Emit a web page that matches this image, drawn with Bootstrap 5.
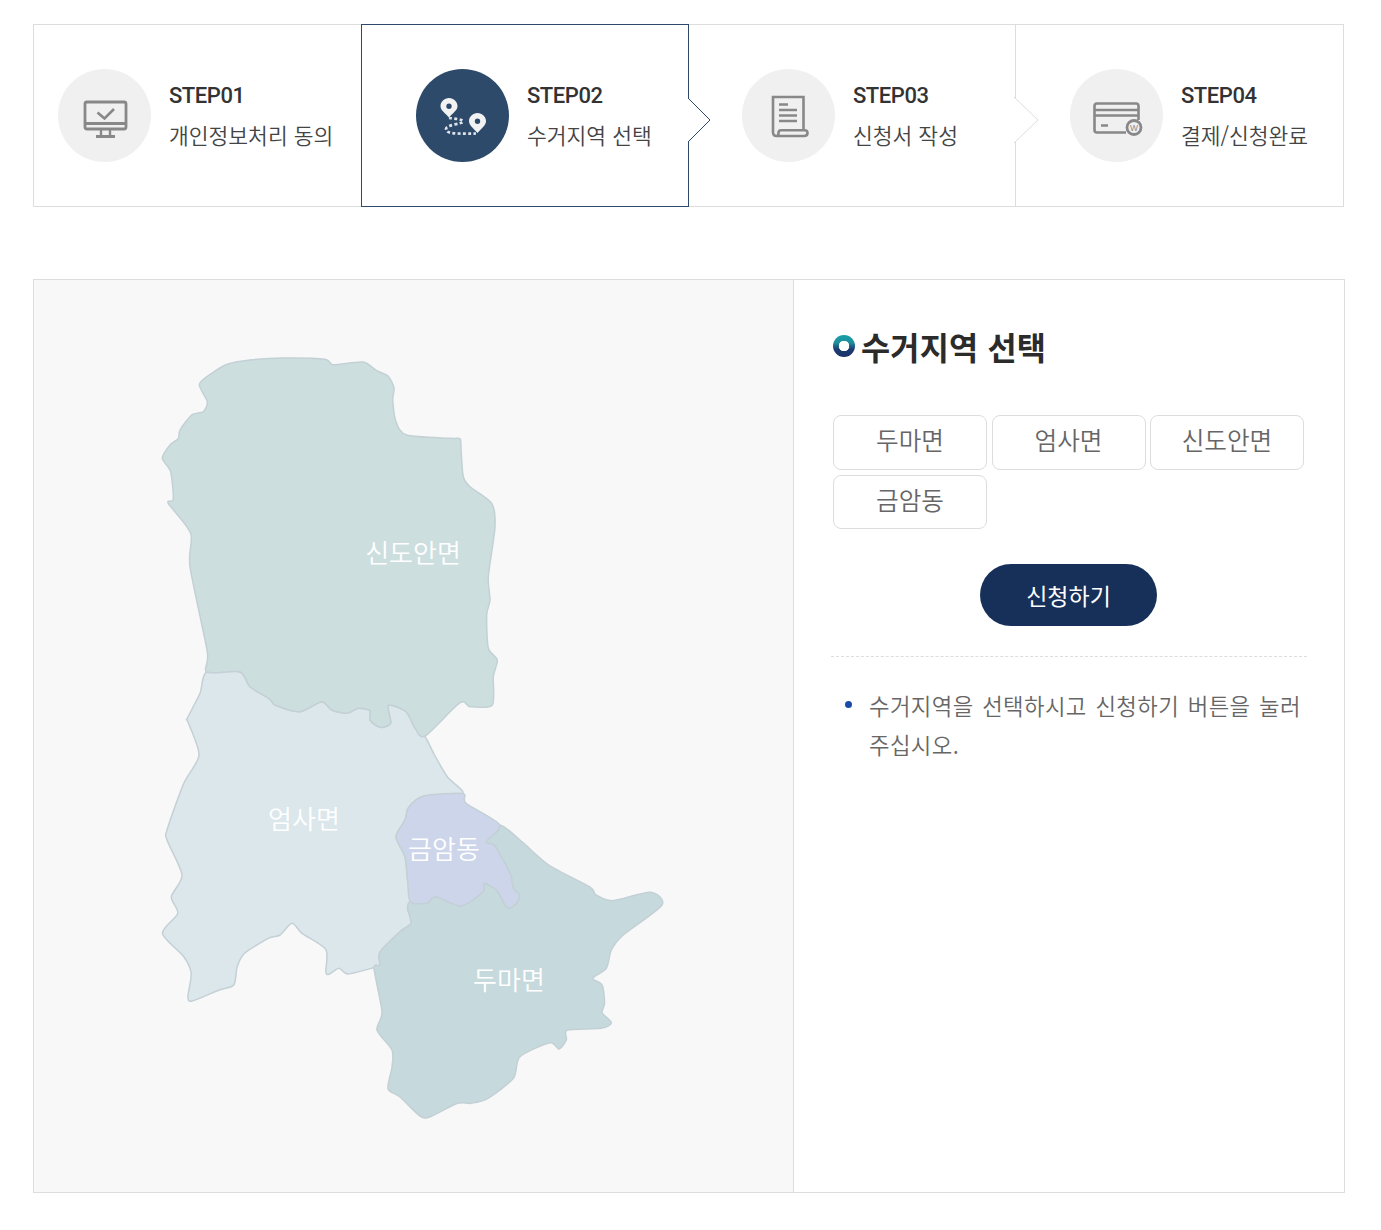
<!DOCTYPE html>
<html lang="ko">
<head>
<meta charset="utf-8">
<title>수거지역 선택</title>
<link href="https://cdn.jsdelivr.net/npm/bootstrap@5.3.0/dist/css/bootstrap.min.css" rel="stylesheet">
<style>
body{background:#fff;font-family:"Noto Sans CJK KR","Noto Sans",sans-serif;color:#333}
.page-wrap{padding:24px 36px 37px 33px;width:1381px}
.step-box{height:183px;border:1px solid #ddd;border-left-width:0;position:relative;background:#fff}
.s1{width:328px;border-left-width:1px;border-right-width:0;padding-left:24px}
.s2{width:328px;border:1px solid #2d4a6c;border-left-width:1px;padding-left:54px;z-index:2}
.s3{width:327px;padding-left:53px}
.s4{width:328px;padding-left:54px}
.s3{z-index:1}
.step-dot{width:93px;height:93px;flex:none;background:#f0f0f0;margin-right:18px}
.s2 .step-dot{background:#2d4a6b}
.step-dot svg{display:block}
.step-no{font:500 22px/40px Roboto,sans-serif;letter-spacing:-.45px;color:#333}
.step-sub{font-size:21.5px;line-height:38px;margin-bottom:2px;color:#444;font-weight:350;white-space:nowrap}
.step-tip{position:absolute;right:-23px;top:72px}
.s3 .step-tip{right:-24px}
.main-box{margin-top:72px;width:1312px;height:914px;border:1px solid #ddd}
.map-side{width:760px;flex:none;background:#f8f8f8;border-right:1px solid #ddd}
.map-side svg{display:block}
.map-label{font-size:26px;fill:#fff;font-weight:350;text-anchor:middle}
.info-side{width:550px;flex:none;padding:0 0 0 38px}
.info-title{font-size:31.700px;line-height:46px;font-weight:700;color:#2b2b2b;margin:43px 0 46px 1px;letter-spacing:.2px}
.ring{width:22px;height:22px;border-radius:50%;margin-right:6px;background:radial-gradient(circle at 50% 50%,#fff 0 5px,transparent 5.5px),linear-gradient(180deg,#17a0a6 0,#1f8f9e 35%,#1d3c72 65%,#1b3468 100%)}
.area-grid{margin-left:1px;width:475px;gap:5px 4.5px}
.area-btn{width:154px;height:54.5px;border:1px solid #ddd;border-radius:8px;background:#fff;color:#666;font-size:24.600px;font-weight:350;line-height:46px;padding:0 0 8px}
.apply-row{width:473px}
.apply-btn{width:177px;height:62px;border-radius:31px;background:#16305a;color:#fff;border:0;font-size:23px;font-weight:400;margin-top:35px}
.dash-line{border-top:1px dashed #ddd;margin:30px 0 0 -1px;width:476px}
.note-list{list-style:none;margin:29px 0 0;padding:0 0 0 37px;width:475px;position:relative}
.note-list li{font-size:22.300px;line-height:39px;color:#666;font-weight:350;position:relative;letter-spacing:.4px;word-spacing:2px}
.note-list li::before{content:"";position:absolute;left:-24px;top:15px;width:7px;height:7px;border-radius:50%;background:#1b4ba8}
</style>
</head>
<body>
<div class="page-wrap">
  <div class="d-flex">
    <div class="step-box s1 d-flex align-items-center">
      <div class="step-dot rounded-circle">
        <svg width="93" height="93" viewBox="0 0 93 93" fill="none" stroke="#888" stroke-width="2.800">
          <rect x="27" y="33" width="41" height="27" rx="2"/>
          <path d="M27 54.500h41M38 67.500h19" />
          <path d="M43 60v7M52 60v7" stroke-width="2.400"/>
          <path d="M39.500 43.500l7 6 9.500-9.500" stroke-width="2.600"/>
        </svg>
      </div>
      <div><div class="step-no">STEP01</div><div class="step-sub">개인정보처리 동의</div></div>
    </div>
    <div class="step-box s2 d-flex align-items-center">
      <div class="step-dot rounded-circle">
        <svg width="93" height="93" viewBox="0 0 93 93" fill="none">
          <path fill-rule="evenodd" fill="#f2f2f2" d="M33 29c4.700 0 8.500 3.700 8.500 8.200 0 4.400-5 6.800-8.500 11.300-3.500-4.500-8.500-6.900-8.500-11.300C24.500 32.700 28.300 29 33 29zm0 5.500a2.700 2.700 0 1 0 0 5.400 2.700 2.700 0 0 0 0-5.400z"/>
          <path fill-rule="evenodd" fill="#f2f2f2" d="M61.500 44c4.700 0 8.500 3.700 8.500 8.200 0 4.400-5 7.300-8.500 11.800-3.500-4.500-8.500-7.400-8.500-11.800 0-4.500 3.800-8.200 8.500-8.200zm0 5.500a2.700 2.700 0 1 0 0 5.400 2.700 2.700 0 0 0 0-5.400z"/>
          <path d="M33 49c4 .5 14 1 14 3.500s-17 3-17 7.500 8 5 30 4.500" stroke="#dfe4ea" stroke-width="2.700" stroke-dasharray="3 2.300"/>
        </svg>
      </div>
      <div><div class="step-no">STEP02</div><div class="step-sub">수거지역 선택</div></div>
      <svg class="step-tip" width="23" height="46" viewBox="0 0 23 46"><path d="M0 1l22 22L0 45z" fill="#fff"/><path d="M0 1l22 22L0 45" fill="none" stroke="#2d4a6c"/></svg>
    </div>
    <div class="step-box s3 d-flex align-items-center">
      <div class="step-dot rounded-circle">
        <svg width="93" height="93" viewBox="0 0 93 93" fill="none" stroke="#888" stroke-width="2.600">
          <path d="M31 63V28h30.500v33.500"/>
          <path d="M31 63c0 3 1.500 4 3.500 4h27.500c2.500 0 3.500-1.500 3.500-3 0-1.800-1-2.700-3-2.700H39c-2 0-2.500 1.300-2.500 2.700S36 67 34.500 67"/>
          <path d="M37 35.500h9M37 41h18M37 46.500h18M37 52h18"/>
        </svg>
      </div>
      <div><div class="step-no">STEP03</div><div class="step-sub">신청서 작성</div></div>
      <svg class="step-tip" width="25" height="46" viewBox="0 0 25 46"><path d="M1 1l23 22L1 45z" fill="#fff"/><path d="M0 0l24 23L0 46" fill="none" stroke="#ddd"/></svg>
    </div>
    <div class="step-box s4 d-flex align-items-center">
      <div class="step-dot rounded-circle">
        <svg width="93" height="93" viewBox="0 0 93 93" fill="none" stroke="#888" stroke-width="2.600">
          <path d="M56 63.500H27c-1.500 0-2.500-1-2.500-2.500V37c0-1.500 1-2.500 2.500-2.500h39c1.500 0 2.500 1 2.500 2.500v14"/>
          <path d="M24.500 41h44M24.500 46.500h44M31 56.500h7"/>
          <circle cx="64" cy="58.500" r="7" fill="#f0f0f0" stroke-width="2.800"/>
          <text x="64" y="61.500" font-size="8.500" text-anchor="middle" fill="#888" stroke="none" font-family="Liberation Sans,sans-serif">W</text>
        </svg>
      </div>
      <div><div class="step-no">STEP04</div><div class="step-sub">결제/신청완료</div></div>
    </div>
  </div>

  <div class="main-box d-flex">
    <div class="map-side">
      <svg width="759" height="912" viewBox="34 280 759 912">
        <path class="region" fill="#dce7ec" data-pts="206.700,672 240,672 250,686.700 270,699.300 275,705 300,711.700 321.700,701.700 331.700,710 346.700,713.300 358.300,708.300 370,710.700 370,720 380,727.300 390.700,723.300 388.300,705.300 406,711.700 415,728 425,736.500 434,754 447.500,777 462.700,793.500 423.800,796 408.600,807.500 405,820 396,836.700 405,856.700 407.600,880 410.300,901.700 407.600,908.300 411,923.300 400,931.700 379.800,952.300 379.800,965 371.400,968.300 347.700,974 339,968.300 329,974.300 325.800,971.700 325.800,949.300 302,933.300 292,923.300 280,935 268.300,938.300 244.600,953.300 237.200,966.700 233.800,985 219.300,990 192.300,1001 187.900,996.700 191.200,973.300 183.800,956.700 162.500,933.300 177.700,913.300 171.300,896.700 182,875 167,840 167,830 183.800,783.300 199,755 187.900,721.700 187.300,718.300 200,693.300"></path>
        <path class="region" fill="#cddedf" data-pts="199.300,384.300 211.700,373.300 228,364 250,360 283,358 325,359.300 333,364.700 363,362 376.700,370.700 388,376 394,388 392.700,400 396,421.700 406.700,435 450,438.300 460,438.700 461,449 463.300,476.700 470,486.700 491.700,503.300 495,526.700 488.300,576.700 490,600 486.700,615 488.300,648 497.300,660 493.300,676.700 492.300,705 470,706.700 460,702.700 425,736 415,728 406,711.700 388.300,705.300 390.700,723.300 380,727.300 370,720 370,710.700 358.300,708.300 346.700,713.300 331.700,710 321.700,701.700 300,711.700 275,705 270,699.300 250,686.700 240,672 206.700,672 207.300,651.700 190,566.700 190.700,533.300 168.300,503.300 173.300,499.300 170.700,471.700 162.300,458.300 170,445 178.300,438.300 180,430 191.700,415 203.300,411.700 207.300,401.700"></path>
        <path class="region" fill="#c6d9dd" data-pts="499.800,825 521.800,841.700 548.800,865 589.400,886.700 596.200,895 613,900.700 650.200,892.300 662,905 623.200,935 611.400,950 606.300,968.300 592.800,978.300 602.200,985 604.600,1003.300 602.200,1012.700 611.400,1022.700 601.200,1028.300 567.400,1030 566.400,1040 559,1049 550,1042.700 520,1056.700 513.400,1078.300 488,1098.300 471,1103.300 457.600,1103.300 430.500,1116.700 420,1116 400,1097 388,1088.700 392,1067 392,1050 377,1030 382,1012 374,968.300 379.800,965 379.800,952.300 400,931.700 411,923.300 407.600,908.300 410.300,901.700 427,903.300 435.600,896.700 461,906 483,891.700 484,883.300 496.500,890 504.200,903.300 508.300,908.300 516.700,903.300 519.400,895 513.400,888.300 510,873.300 494.800,846 486.300,841.700"></path>
        <path class="region" fill="#cdd5ea" data-pts="462.700,793.500 466,803.300 499.800,825 486.300,841.700 494.800,846 510,873.300 513.400,888.300 519.400,895 516.700,903.300 508.300,908.300 504.200,903.300 496.500,890 484,883.300 483,891.700 461,906 435.600,896.700 427,903.300 410.300,901.700 407.600,880 405,856.700 396,836.700 405,820 408.600,807.500 423.800,796"></path>
        <text class="map-label" x="413" y="563">신도안면</text>
        <text class="map-label" x="304" y="829">엄사면</text>
        <text class="map-label" x="444" y="859">금암동</text>
        <text class="map-label" x="509" y="990">두마면</text>
      </svg>
    </div>
    <div class="info-side">
      <h2 class="info-title d-flex align-items-center"><span class="ring d-inline-block"></span>수거지역 선택</h2>
      <div class="area-grid d-flex flex-wrap">
        <button type="button" class="btn area-btn">두마면</button>
        <button type="button" class="btn area-btn">엄사면</button>
        <button type="button" class="btn area-btn">신도안면</button>
        <button type="button" class="btn area-btn">금암동</button>
      </div>
      <div class="apply-row text-center"><button type="button" class="btn apply-btn">신청하기</button></div>
      <div class="dash-line"></div>
      <ul class="note-list"><li>수거지역을 선택하시고 신청하기 버튼을 눌러 주십시오.</li></ul>
    </div>
  </div>
</div>
<script src="https://cdn.jsdelivr.net/npm/bootstrap@5.3.0/dist/js/bootstrap.bundle.min.js"></script>
<script>
document.querySelectorAll('.region').forEach(function(el){
  var p=el.dataset.pts.trim().split(/\s+/).map(function(s){return s.split(',').map(Number)});
  var n=p.length,k=0.13,d='M'+p[0][0]+' '+p[0][1];
  for(var i=0;i<n;i++){
    var a=p[(i-1+n)%n],b=p[i],c=p[(i+1)%n],e=p[(i+2)%n];
    d+='C'+(b[0]+(c[0]-a[0])*k).toFixed(1)+' '+(b[1]+(c[1]-a[1])*k).toFixed(1)+' '+(c[0]-(e[0]-b[0])*k).toFixed(1)+' '+(c[1]-(e[1]-b[1])*k).toFixed(1)+' '+c[0]+' '+c[1];
  }
  el.setAttribute('d',d+'Z');
  el.setAttribute('stroke','#c3d0d5');
  el.setAttribute('stroke-width','1.5');
  el.setAttribute('stroke-linejoin','round');
});
</script>
</body>
</html>
